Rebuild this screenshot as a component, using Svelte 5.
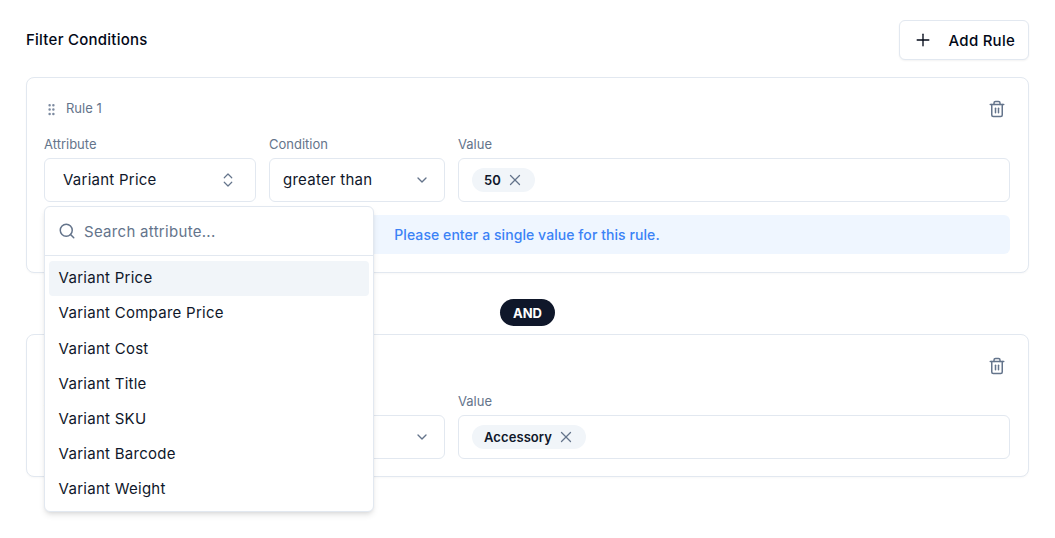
<script>
  const options = [
    'Variant Price',
    'Variant Compare Price',
    'Variant Cost',
    'Variant Title',
    'Variant SKU',
    'Variant Barcode',
    'Variant Weight'
  ]
</script>

{#snippet trash()}
  <button class="icon-btn" aria-label="Delete rule">
    <svg width="18" height="18" viewBox="0 0 24 24" fill="none" stroke="currentColor" stroke-width="2" stroke-linecap="round" stroke-linejoin="round">
      <path d="M3 6h18" />
      <path d="M19 6v14a2 2 0 0 1-2 2H7a2 2 0 0 1-2-2V6" />
      <path d="M8 6V4a2 2 0 0 1 2-2h4a2 2 0 0 1 2 2v2" />
      <path d="M10 11v6" />
      <path d="M14 11v6" />
    </svg>
  </button>
{/snippet}

{#snippet chevron()}
  <svg class="chev" width="16" height="16" viewBox="0 0 24 24" fill="none" stroke="currentColor" stroke-width="2" stroke-linecap="round" stroke-linejoin="round">
    <path d="m6 9 6 6 6-6" />
  </svg>
{/snippet}

{#snippet close()}
  <svg class="x" width="18" height="18" viewBox="0 0 24 24" fill="none" stroke="currentColor" stroke-width="1.75" stroke-linecap="round" stroke-linejoin="round">
    <path d="M18 6 6 18" />
    <path d="m6 6 12 12" />
  </svg>
{/snippet}

<main class="page">
  <header class="top">
    <h2>Filter Conditions</h2>
    <button class="add">
      <svg width="20" height="20" viewBox="0 0 24 24" fill="none" stroke="currentColor" stroke-width="1.6" stroke-linecap="round" stroke-linejoin="round">
        <path d="M5 12h14" />
        <path d="M12 5v14" />
      </svg>
      Add Rule
    </button>
  </header>

  <section class="card">
    <div class="rule-head">
      <div class="rule-name">
        <svg class="grip" width="15" height="15" viewBox="0 0 24 24" fill="none" stroke="currentColor" stroke-width="2" stroke-linecap="round" stroke-linejoin="round">
          <circle cx="9" cy="12" r="1" /><circle cx="9" cy="5" r="1" /><circle cx="9" cy="19" r="1" />
          <circle cx="15" cy="12" r="1" /><circle cx="15" cy="5" r="1" /><circle cx="15" cy="19" r="1" />
        </svg>
        <span class="txt">Rule 1</span>
      </div>
      {@render trash()}
    </div>
    <div class="fields">
      <div class="field">
        <span class="label">Attribute</span>
        <div class="control attr">
          <span class="txt">Variant Price</span>
          <svg class="chev" width="18" height="18" viewBox="0 0 24 24" fill="none" stroke="currentColor" stroke-width="1.6" stroke-linecap="round" stroke-linejoin="round">
            <path d="m7 15 5 5 5-5" />
            <path d="m7 9 5-5 5 5" />
          </svg>
        </div>
      </div>
      <div class="field">
        <span class="label">Condition</span>
        <div class="control cond"><span class="txt">greater than</span> {@render chevron()}</div>
      </div>
      <div class="field">
        <span class="label">Value</span>
        <div class="control value">
          <span class="tag">50 {@render close()}</span>
        </div>
      </div>
    </div>
    <div class="note">Please enter a single value for this rule.</div>

    <div class="popover">
      <div class="search">
        <svg width="18" height="18" viewBox="0 0 24 24" fill="none" stroke="currentColor" stroke-width="2" stroke-linecap="round" stroke-linejoin="round">
          <circle cx="11" cy="11" r="8" />
          <path d="m21 21-4.3-4.3" />
        </svg>
        <span>Search attribute...</span>
      </div>
      <ul>
        {#each options as opt, i}
          <li class:active={i == 0}>{opt}</li>
        {/each}
      </ul>
    </div>
  </section>

  <div class="joiner"><span>AND</span></div>

  <section class="card">
    <div class="rule-head">
      <div class="rule-name"><span class="txt">Rule 2</span></div>
      {@render trash()}
    </div>
    <div class="fields">
      <div class="field">
        <span class="label">Attribute</span>
        <div class="control attr"><span class="txt">Product Type</span></div>
      </div>
      <div class="field">
        <span class="label">Condition</span>
        <div class="control cond"><span class="txt">is</span> {@render chevron()}</div>
      </div>
      <div class="field">
        <span class="label">Value</span>
        <div class="control value">
          <span class="tag">Accessory {@render close()}</span>
        </div>
      </div>
    </div>
  </section>
</main>

<style>
  :global(body) {
    background: #fff;
    font-family: Inter, sans-serif;
    color: #0f172a;
  }
  .page {
    box-sizing: border-box;
    min-height: 538px;
    padding: 20px 26px 0 26px;
  }
  .top {
    display: flex;
    justify-content: space-between;
    align-items: center;
    margin-bottom: 17px;
  }
  h2 {
    margin: 0 0 1px 0;
    font-size: 15px;
    font-weight: 500;
    letter-spacing: 0.25px;
    color: #020817;
  }
  .add {
    display: flex;
    align-items: center;
    gap: 16px;
    height: 40px;
    padding: 0 13px;
    background: #fff;
    border: 1px solid #e2e8f0;
    border-radius: 6px;
    box-shadow: 0 1px 2px rgba(0, 0, 0, 0.05);
    font: 500 15px Inter, sans-serif;
    letter-spacing: 0.25px;
    color: #020817;
  }
  .card {
    position: relative;
    border: 1px solid #e2e8f0;
    border-radius: 8px;
    padding: 17px 18px 17px 17px;
    background: #fff;
    box-shadow: 0 1px 2px rgba(0, 0, 0, 0.03);
  }
  .rule-head {
    display: flex;
    justify-content: space-between;
    align-items: center;
    height: 28px;
    margin-bottom: 11px;
  }
  .rule-name {
    display: flex;
    align-items: center;
    gap: 7px;
    font-size: 13px;
    color: #64748b;
  }
  .grip {
    color: #7c8aa0;
  }
  .icon-btn {
    display: flex;
    padding: 0;
    margin-right: 4px;
    border: none;
    background: none;
    color: #64748b;
  }
  .fields {
    display: grid;
    grid-template-columns: 212px 176px 1fr;
    gap: 13px;
  }
  .field {
    display: flex;
    flex-direction: column;
    gap: 4px;
  }
  .label {
    font-size: 13px;
    line-height: 20px;
    color: #64748b;
  }
  .control {
    display: flex;
    align-items: center;
    justify-content: space-between;
    box-sizing: border-box;
    height: 44px;
    border: 1px solid #e2e8f0;
    border-radius: 6px;
    font-size: 15px;
    letter-spacing: 0.25px;
    color: #0f172a;
  }
  .txt {
    margin-bottom: 2px;
  }
  .attr {
    padding: 0 18px 0 18px;
  }
  .cond {
    padding: 0 14px 0 13px;
  }
  .value {
    justify-content: flex-start;
    padding: 0 13px;
  }
  .chev {
    color: #64748b;
  }
  .tag {
    display: flex;
    align-items: center;
    gap: 5px;
    height: 24px;
    padding: 0 11px 0 12px;
    border-radius: 12px;
    background: #f1f5f9;
    font-size: 13px;
    font-weight: 600;
    letter-spacing: 0.08px;
    color: #0f172a;
  }
  .x {
    color: #64748b;
  }
  .note {
    display: flex;
    align-items: center;
    justify-content: center;
    height: 39px;
    margin: 13px 0 1px 0;
    border-radius: 6px;
    background: #eff6ff;
    font-size: 14px;
    font-weight: 500;
    letter-spacing: 0.07px;
    color: #3b82f6;
  }
  .popover {
    position: absolute;
    z-index: 10;
    top: 128px;
    left: 17px;
    width: 330px;
    box-sizing: border-box;
    border: 1px solid #e2e8f0;
    border-radius: 6px;
    background: #fff;
    box-shadow: 0 4px 6px -1px rgba(0, 0, 0, 0.1), 0 2px 4px -2px rgba(0, 0, 0, 0.1);
  }
  .search {
    display: flex;
    align-items: center;
    gap: 8px;
    height: 48px;
    padding: 0 13px;
    border-bottom: 1px solid #e2e8f0;
    font-size: 15px;
    letter-spacing: 0.3px;
    color: #64748b;
  }
  ul {
    list-style: none;
    margin: 0;
    padding: 5px 4px 3.6px 4px;
  }
  li {
    display: flex;
    align-items: center;
    box-sizing: border-box;
    height: 35.2px;
    padding: 0 10px 1.6px 9.6px;
    border-radius: 4px;
    font-size: 15px;
    letter-spacing: 0.27px;
    color: #0f172a;
  }
  .active {
    background: #f1f5f9;
  }
  .joiner {
    display: flex;
    justify-content: center;
    margin: 26px 0 8px 0;
  }
  .joiner span {
    display: flex;
    align-items: center;
    height: 27px;
    padding: 0 13px;
    border-radius: 14px;
    background: #0f172a;
    font-size: 13px;
    font-weight: 700;
    color: #fff;
  }
</style>
